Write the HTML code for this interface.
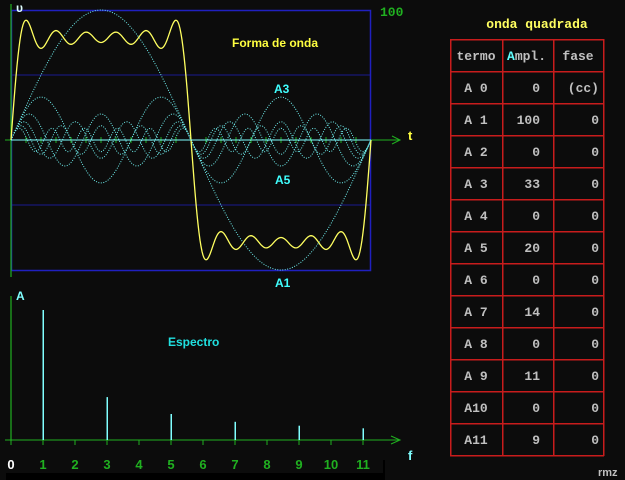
<!DOCTYPE html>
<html><head><meta charset="utf-8"><style>
html,body{margin:0;padding:0;background:#0c0c0c;width:625px;height:480px;overflow:hidden}
svg{display:block}
text{font-family:"Liberation Mono",monospace;font-weight:bold}
.s{font-family:"Liberation Sans",sans-serif;font-weight:bold}
</style></head><body>
<svg id="g" width="625" height="480" xmlns="http://www.w3.org/2000/svg">
<rect width="625" height="480" fill="#0c0c0c"/>
<line x1="11" y1="75" x2="371" y2="75" stroke="#1a1a90"/>
<line x1="11" y1="205" x2="371" y2="205" stroke="#1a1a90"/>
<rect x="11.5" y="10.5" width="359" height="260" fill="none" stroke="#2020c0" stroke-width="1.5"/>
<line x1="11" y1="4" x2="11" y2="277" stroke="#20b020" stroke-width="1.2"/>
<line x1="5" y1="140" x2="400" y2="140" stroke="#20b020"/>
<path d="M392 136 L400 140 L392 144" fill="none" stroke="#20b020"/>
<g id="curves"></g>
<line x1="11" y1="140" x2="371" y2="140" stroke="#80ffff"/>
<text x="16" y="12" fill="#e0ffff" class="s" font-size="12">υ</text>
<text x="380" y="16" fill="#20b020" font-size="13">100</text>
<text x="232" y="47" fill="#ffff40" class="s" font-size="12">Forma de onda</text>
<text x="274" y="93" fill="#40ffff" class="s" font-size="12">A3</text>
<text x="275" y="184" fill="#40ffff" class="s" font-size="12">A5</text>
<text x="275" y="287" fill="#40ffff" class="s" font-size="12">A1</text>
<text x="408" y="140" fill="#ffff40" class="s" font-size="13">t</text>
<line x1="11" y1="296" x2="11" y2="441" stroke="#20b020" stroke-width="1.2"/>
<line x1="5" y1="440" x2="400" y2="440" stroke="#20b020"/>
<path d="M391 436 L400 440 L391 444" fill="none" stroke="#20b020"/>
<text x="16" y="300" fill="#80ffff" class="s" font-size="12">A</text>
<text x="168" y="346" fill="#20e0e0" class="s" font-size="12">Espectro</text>
<text x="408" y="460" fill="#80ffff" class="s" font-size="13">f</text>
<g id="spec"></g>
<rect x="6" y="473" width="379" height="7" fill="#000"/>
<rect x="383" y="460" width="2" height="20" fill="#000"/>
<text x="537" y="28" fill="#ffff60" font-size="13" text-anchor="middle">onda quadrada</text>
<g id="tbl"></g>
<text x="598" y="476" fill="#c0c0c0" class="s" font-size="11" font-weight="normal">rmz</text>
</svg>
<script>
var NS="http://www.w3.org/2000/svg";
function el(p,t,a,txt){var e=document.createElementNS(NS,t);for(var k in a)e.setAttribute(k,a[k]);if(txt!=null)e.textContent=txt;p.appendChild(e);return e;}
var c=document.getElementById("curves");
var amps=[100,33,20,14,11,9],ks=[1,3,5,7,9,11];
for(var i=0;i<6;i++){var d="";for(var x=0;x<=360;x++){var y=140-1.3*amps[i]*Math.sin(2*Math.PI*ks[i]*x/360);d+=(x?"L":"M")+(11+x)+" "+y.toFixed(1);}
el(c,"path",{d:d,fill:"none",stroke:"#70f0f0","stroke-width":"1","stroke-dasharray":"1 1.5"});}
var d="";for(var x=0;x<=360;x++){var s=0;for(var i=0;i<6;i++)s+=amps[i]*Math.sin(2*Math.PI*ks[i]*x/360);d+=(x?"L":"M")+(11+x)+" "+(140-1.3*s).toFixed(1);}
el(c,"path",{d:d,fill:"none",stroke:"#ffff60","stroke-width":"1.3"});
for(var j=1;j<24;j++){var tx=11+j*15;if(j==12)continue;el(c,"line",{x1:tx,y1:137,x2:tx,y2:143,stroke:"#20b020"});}
var sp=document.getElementById("spec");
for(var n=0;n<=11;n++){var x=11+32*n;el(sp,"line",{x1:x,y1:440,x2:x,y2:445,stroke:"#20b020"});
el(sp,"text",{x:x,y:469,fill:n?"#20b020":"#ffffff","font-size":"13","text-anchor":"middle",class:"s"},String(n));}
for(var i=0;i<6;i++){var x=11+32*ks[i];el(sp,"rect",{x:x-0.5,y:440-1.3*amps[i],width:1.5,height:1.3*amps[i],fill:"#80ffff"});}
var t=document.getElementById("tbl");
var cols=[450,502,553,603],T0=39,h=32,R="#c81c1c";
for(var r=0;r<=13;r++)el(t,"rect",{x:450,y:T0+r*h,width:154,height:1.5,fill:R});
for(var k=0;k<4;k++)el(t,"rect",{x:cols[k],y:T0,width:1.5,height:13*h+1,fill:R});
var g="#c0c0c0";
el(t,"text",{x:476,y:60,fill:g,"font-size":"13","text-anchor":"middle"},"termo");
var a=el(t,"text",{x:507,y:60,fill:g,"font-size":"13"});el(a,"tspan",{fill:"#60ffff"},"A");el(a,"tspan",{},"mpl.");
el(t,"text",{x:578,y:60,fill:g,"font-size":"13","text-anchor":"middle"},"fase");
var av=[0,100,0,33,0,20,0,14,0,11,0,9];
for(var r=0;r<12;r++){var y=T0+(r+1)*h+21;
el(t,"text",{x:476,y:y,fill:g,"font-size":"13","text-anchor":"middle"},r<10?"A "+r:"A"+r);
el(t,"text",{x:540,y:y,fill:g,"font-size":"13","text-anchor":"end"},String(av[r]));
el(t,"text",{x:599,y:y,fill:g,"font-size":"13","text-anchor":"end"},r==0?"(cc)":"0");}
</script>
</body></html>
